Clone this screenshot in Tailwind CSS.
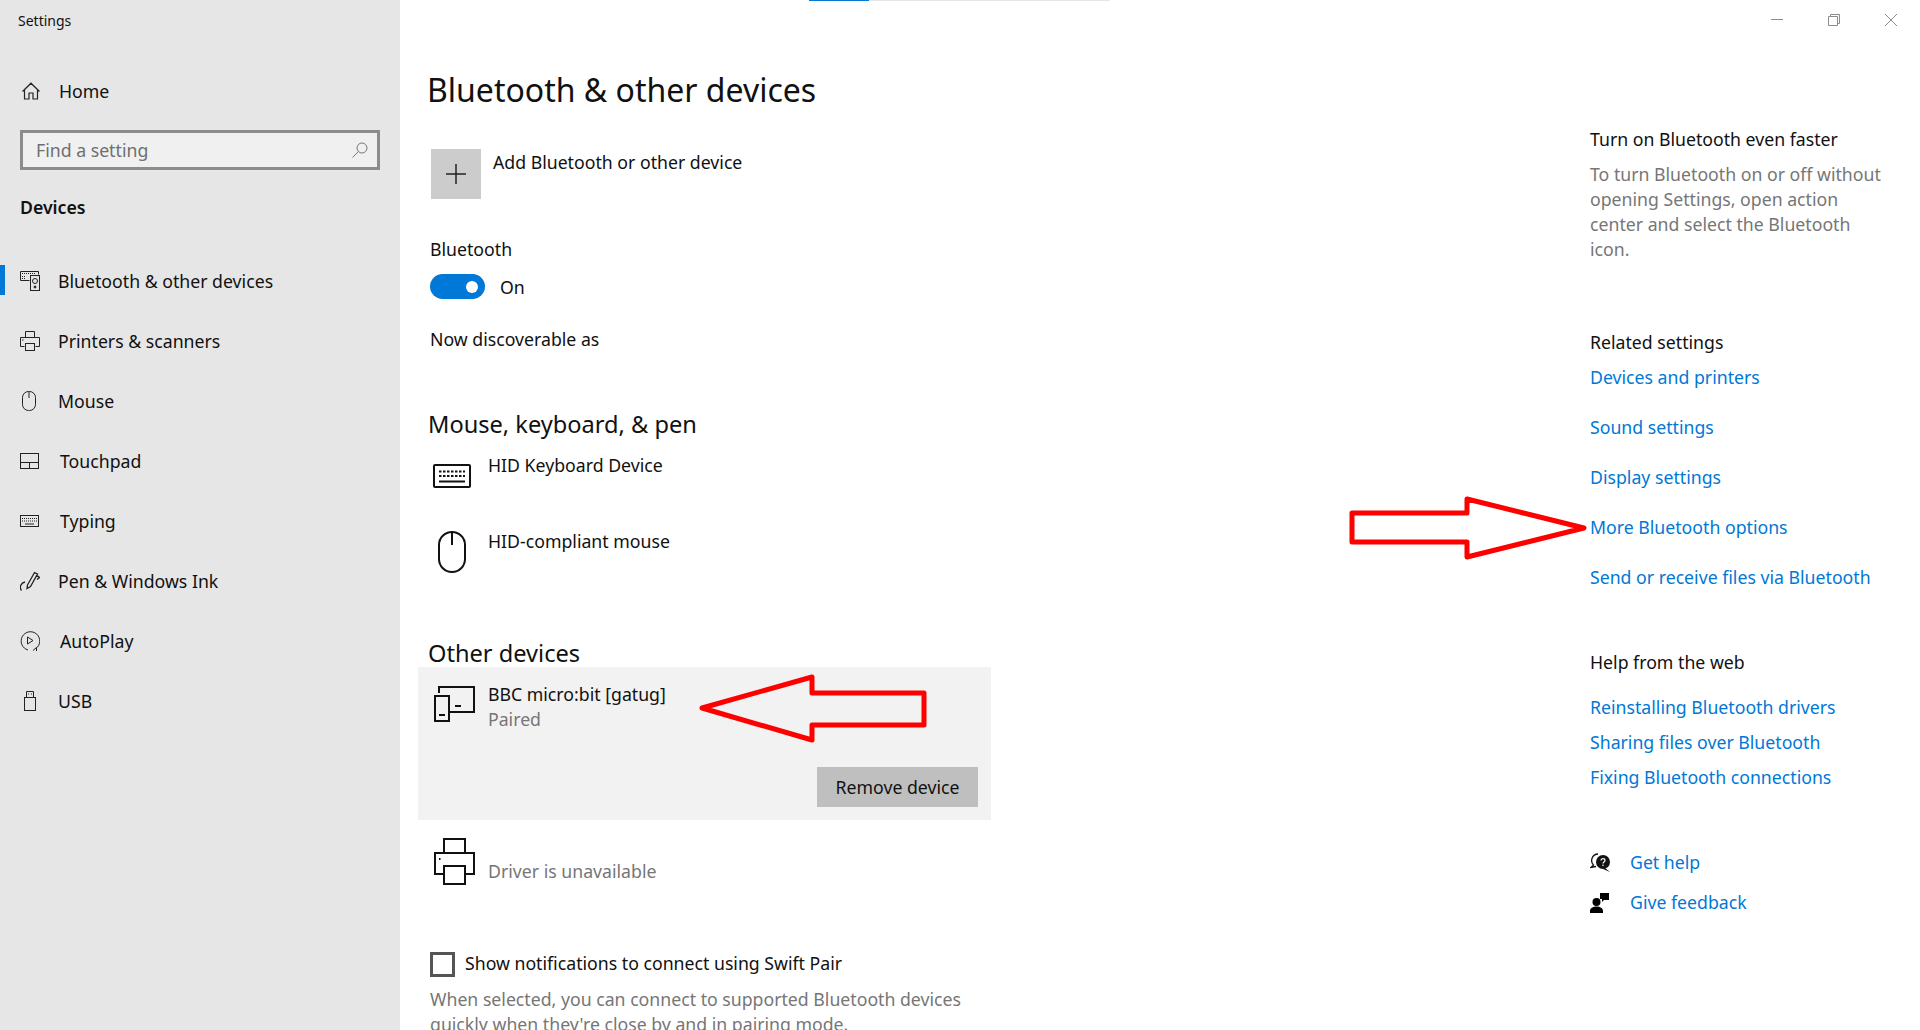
<!DOCTYPE html>
<html lang="en">
<head>
  <meta charset="UTF-8">
  <title>Settings</title>
  <script src="https://cdn.jsdelivr.net/npm/@tailwindcss/browser@4"></script>
</head>
<body class="relative h-[1030px] overflow-hidden bg-white text-[17.7px] text-[#111] font-['Noto_Sans','Open_Sans',sans-serif]">
  <!-- loading bar at top -->
  <div class="absolute left-[809px] top-0 w-[301px] h-px bg-[#e6e6e6]"><div class="w-[60px] h-px bg-[#0078d7]"></div></div>

  <!-- window controls -->
  <div class="absolute right-[23px] top-[13px] flex gap-[45px] text-[#8c8c8c]">
    <svg class="w-[12px] h-[14px]" viewBox="0 0 12 14" fill="none" stroke="currentColor"><path d="M0 6.500h12"/></svg>
    <svg class="w-[12px] h-[14px]" viewBox="0 0 12 14" fill="none" stroke="currentColor"><path d="M.5 3.500h9v9h-9zM2.500 3.500v-2h9v9h-2"/></svg>
    <svg class="w-[12px] h-[14px]" viewBox="0 0 12 14" fill="none" stroke="currentColor"><path d="M0 1l12 12M12 1L0 13"/></svg>
  </div>

  <div class="flex h-full">
    <!-- sidebar -->
    <aside class="w-[400px] shrink-0 h-full bg-[#e6e6e6]">
      <div class="h-[40px] pl-[18px] flex items-center text-[14px]">Settings</div>
      <div class="mt-[31px] h-[40px] pl-[22px] flex items-center">
        <svg class="w-[18px] h-[18px] text-[#222]" viewBox="0 0 18 18" fill="none" stroke="currentColor" stroke-width="1.2"><path d="M.5 9.500L9 1.200l8.500 8.300M2.500 8v9h4.500v-6h4v6h4.500V8"/></svg>
        <span class="ml-[19px]">Home</span>
      </div>
      <div class="mt-[19px] mx-[20px] h-[40px] border-[3px] border-[#8c8c8c] bg-[#f0f0f0] flex items-center justify-between pl-[13px] pr-[9px] text-[#6f6f6f]">
        <span>Find a setting</span>
        <svg class="w-[16px] h-[16px]" viewBox="0 0 16 16" fill="none" stroke="#777" stroke-width="1"><circle cx="10" cy="6" r="5"/><path d="M6.500 9.500L.5 15.500"/></svg>
      </div>
      <div class="mt-[22px] h-[30px] pl-[20px] flex items-center font-semibold">Devices</div>
      <nav class="mt-[29px]">
        <div class="relative h-[60px] pl-[20px] flex items-center">
          <div class="absolute left-0 top-[14px] w-[5px] h-[30px] bg-[#0078d7]"></div>
          <svg class="w-[20px] h-[20px] text-[#222]" viewBox="0 0 20 20" fill="none" stroke="currentColor"><path d="M9.500 9.500H.5v-9h18v3"/><path d="M2 2.500h14M2 5.500h3M2 7.500h3" stroke-dasharray="1 1"/><rect x="10.500" y="4.500" width="9" height="15"/><circle cx="15" cy="10" r="2.500"/><circle cx="15" cy="16" r="1" fill="currentColor"/></svg>
          <span class="ml-[18px]">Bluetooth &amp; other devices</span>
        </div>
        <div class="h-[60px] pl-[20px] flex items-center">
          <svg class="w-[20px] h-[20px] text-[#222]" viewBox="0 0 20 20" fill="none" stroke="currentColor"><path d="M5.500 6V.5h9V6M4.500 15.500h-4v-9h19v9h-4"/><rect x="5.500" y="12.500" width="9" height="7"/><path d="M2 9h1.500"/></svg>
          <span class="ml-[18px]">Printers &amp; scanners</span>
        </div>
        <div class="h-[60px] pl-[22px] flex items-center">
          <svg class="w-[14px] h-[20px] text-[#222]" viewBox="0 0 14 20" fill="none" stroke="currentColor"><rect x=".5" y=".5" width="13" height="19" rx="6"/><path d="M7 .5V7"/></svg>
          <span class="ml-[22px]">Mouse</span>
        </div>
        <div class="h-[60px] pl-[20px] flex items-center">
          <svg class="w-[19px] h-[16px] text-[#222]" viewBox="0 0 19 16" fill="none" stroke="currentColor"><rect x=".5" y=".5" width="18" height="15"/><path d="M.5 9.500h18M9.500 9.500v6"/></svg>
          <span class="ml-[21px]">Touchpad</span>
        </div>
        <div class="h-[60px] pl-[20px] flex items-center">
          <svg class="w-[19px] h-[12px] text-[#222]" viewBox="0 0 19 12" fill="none" stroke="currentColor"><rect x=".5" y=".5" width="18" height="11"/><path d="M2 3.500h15M2 6h15" stroke-dasharray="1 1"/><path d="M5 9h9"/></svg>
          <span class="ml-[21px]">Typing</span>
        </div>
        <div class="h-[60px] pl-[20px] flex items-center">
          <svg class="w-[20px] h-[20px] text-[#222]" viewBox="0 0 20 20" fill="none" stroke="currentColor" stroke-width="1.300"><path d="M7.500 14l7-12.500 3 1.500-7 12.500-3.500 2zM16.500 4l3 2.500-2.500 2M5 11C1 12-1 16 1.500 19.500"/></svg>
          <span class="ml-[18px]">Pen &amp; Windows Ink</span>
        </div>
        <div class="h-[60px] pl-[20px] flex items-center">
          <svg class="w-[20px] h-[20px] text-[#222]" viewBox="0 0 20 20" fill="none" stroke="currentColor"><path d="M8 19A9.300 9.300 0 1 1 16 17.500"/><path d="M7.500 6v7l5.500-3.500zM13 19.500l3.500-3v3.500"/></svg>
          <span class="ml-[20px]">AutoPlay</span>
        </div>
        <div class="h-[60px] pl-[24px] flex items-center">
          <svg class="w-[12px] h-[20px] text-[#222]" viewBox="0 0 12 20" fill="none" stroke="currentColor"><rect x=".5" y="6.500" width="11" height="13"/><path d="M2.500 6.500v-6h7v6M4 3h1M7 3h1"/></svg>
          <span class="ml-[22px]">USB</span>
        </div>
      </nav>
    </aside>

    <!-- main content -->
    <main class="w-[1190px] shrink-0 pl-[27px] pt-[65px]">
      <h1 class="h-[50px] flex items-center text-[32px] font-normal">Bluetooth &amp; other devices</h1>
      <div class="mt-[34px] ml-[4px] h-[50px] flex">
        <div class="w-[50px] h-[50px] bg-[#cccccc] flex items-center justify-center">
          <svg class="w-[20px] h-[20px] text-[#222]" viewBox="0 0 20 20" fill="none" stroke="currentColor" stroke-width="1.500"><path d="M10 0v20M0 10h20"/></svg>
        </div>
        <span class="ml-[12px] h-[26px] leading-[26px]">Add Bluetooth or other device</span>
      </div>
      <div class="mt-[35px] ml-[3px] h-[30px] flex items-center">Bluetooth</div>
      <div class="mt-[10px] ml-[3px] h-[25px] flex items-center">
        <div class="w-[55px] h-[25px] rounded-full bg-[#0078d7] flex items-center justify-end pr-[7px]">
          <div class="w-[12px] h-[12px] rounded-full bg-white"></div>
        </div>
        <span class="ml-[15px] mt-[2px]">On</span>
      </div>
      <div class="mt-[25px] ml-[3px] h-[30px] flex items-center">Now discoverable as</div>

      <h2 class="mt-[56px] ml-px h-[28px] pt-[2px] flex items-center text-[23.6px] font-normal">Mouse, keyboard, &amp; pen</h2>
      <div class="mt-[15px] h-[76px] flex">
        <div class="w-[61px] pl-[6px] pt-[11px]">
          <svg class="w-[38px] h-[24px]" viewBox="0 0 38 24" fill="none" stroke="#111" stroke-width="2"><rect x="1" y="1" width="36" height="22" rx="1"/><path d="M6 7.500h26M6 12h26" stroke-dasharray="2.500 1.500"/><path d="M6 17.500h26"/></svg>
        </div>
        <span class="h-[24px] leading-[24px]">HID Keyboard Device</span>
      </div>
      <div class="h-[110px] flex">
        <div class="w-[61px] pl-[11px] pt-[2px]">
          <svg class="w-[28px] h-[42px]" viewBox="0 0 28 42" fill="none" stroke="#111" stroke-width="2"><rect x="1" y="1" width="26" height="40" rx="13"/><path d="M14 1v13"/></svg>
        </div>
        <span class="h-[24px] leading-[24px]">HID-compliant mouse</span>
      </div>

      <h2 class="ml-px h-[28px] pt-[2px] flex items-center text-[23.6px] font-normal">Other devices</h2>
      <div class="ml-[-9px] w-[573px] h-[153px] bg-[#f2f2f2] pt-[15px] pr-[13px] flex flex-col">
        <div class="flex">
          <div class="w-[70px] pl-[16px] pt-[4px]">
            <svg class="w-[41px] h-[36px]" viewBox="0 0 41 36" fill="none" stroke="#111" stroke-width="2"><path d="M5 7V1h35v25H16"/><rect x="1" y="10" width="14" height="25"/><path d="M5 29h6M21 20h6"/></svg>
          </div>
          <div>
            <div class="h-[25px] leading-[25px]">BBC micro:bit [gatug]</div>
            <div class="h-[25px] leading-[25px] text-[#767676]">Paired</div>
          </div>
        </div>
        <div class="mt-auto mb-[13px] ml-auto w-[161px] h-[40px] bg-[#bfbfbf] flex items-center justify-center">Remove device</div>
      </div>
      <div class="mt-[18px] h-[47px] flex">
        <div class="w-[61px] pl-[7px]">
          <svg class="w-[41px] h-[47px]" viewBox="0 0 41 47" fill="none" stroke="#111" stroke-width="2"><path d="M10 15V1h21v14M9 36H1V15h39v21h-8"/><rect x="10" y="28" width="21" height="18"/><path d="M5 21h1.500"/></svg>
        </div>
        <span class="mt-[21px] h-[24px] leading-[24px] text-[#767676]">Driver is unavailable</span>
      </div>
      <div class="mt-[67px] ml-[3px] h-[25px] flex items-center">
        <div class="w-[25px] h-[25px] border-[3px] border-[#555]"></div>
        <span class="ml-[10px] mb-[3px]">Show notifications to connect using Swift Pair</span>
      </div>
      <p class="mt-[10px] ml-[3px] w-[560px] leading-[25px] text-[#767676]">When selected, you can connect to supported Bluetooth devices quickly when they're close by and in pairing mode.</p>
    </main>

    <!-- related panel -->
    <section class="w-[330px] pt-[127px] leading-[25px]">
      <div class="h-[25px]">Turn on Bluetooth even faster</div>
      <p class="mt-[10px] text-[#767676]">To turn Bluetooth on or off without<br>opening Settings, open action<br>center and select the Bluetooth<br>icon.</p>
      <div class="mt-[68px] h-[25px]">Related settings</div>
      <div class="mt-[10px] flex flex-col gap-[25px] text-[#0078d7]">
        <a>Devices and printers</a>
        <a>Sound settings</a>
        <a>Display settings</a>
        <a>More Bluetooth options</a>
        <a>Send or receive files via Bluetooth</a>
      </div>
      <div class="mt-[60px] h-[25px]">Help from the web</div>
      <div class="mt-[20px] flex flex-col gap-[10px] text-[#0078d7]">
        <a>Reinstalling Bluetooth drivers</a>
        <a>Sharing files over Bluetooth</a>
        <a>Fixing Bluetooth connections</a>
      </div>
      <div class="mt-[60px] h-[25px] flex items-center">
        <svg class="w-[21px] h-[20px]" viewBox="0 0 21 20" fill="none"><path d="M8 1a6.500 6.500 0 0 0-4.500 11L1 14.500l5-1" stroke="#111" stroke-width="1.300"/><circle cx="13" cy="9" r="7" fill="#111"/><path d="M15 15l5 4-7-3z" fill="#111"/><path d="M11 7.500c0-2.500 4-2.500 4 0 0 1.500-2 1.500-2 3" stroke="#fff" stroke-width="1.200"/><circle cx="13" cy="12.300" r=".8" fill="#fff"/></svg>
        <a class="ml-[19px] text-[#0078d7]">Get help</a>
      </div>
      <div class="mt-[15px] h-[25px] flex items-center">
        <svg class="w-[20px] h-[20px]" viewBox="0 0 20 20" fill="#000"><circle cx="6.500" cy="9" r="4"/><path d="M0 20v-2c0-3 3-4.500 6.500-4.500s6.500 1.500 6.500 4.500v2zM10 0h9v7h-5l-2 2V6h-2z"/></svg>
        <a class="ml-[20px] text-[#0078d7]">Give feedback</a>
      </div>
    </section>
  </div>

  <!-- red annotation arrows pasted on the screenshot -->
  <svg class="absolute left-[690px] top-[665px] w-[245px] h-[90px]" viewBox="690 665 245 90" fill="none" stroke="#ff0000" stroke-width="5" stroke-linejoin="round"><path d="M702 708L812 677V693H924V725H812V740Z"/></svg>
  <svg class="absolute left-[1345px] top-[490px] w-[250px] h-[75px]" viewBox="1345 490 250 75" fill="none" stroke="#ff0000" stroke-width="5" stroke-linejoin="round"><path d="M1352 513H1467V499L1584 528L1467 557V542H1352Z"/></svg>
</body>
</html>
